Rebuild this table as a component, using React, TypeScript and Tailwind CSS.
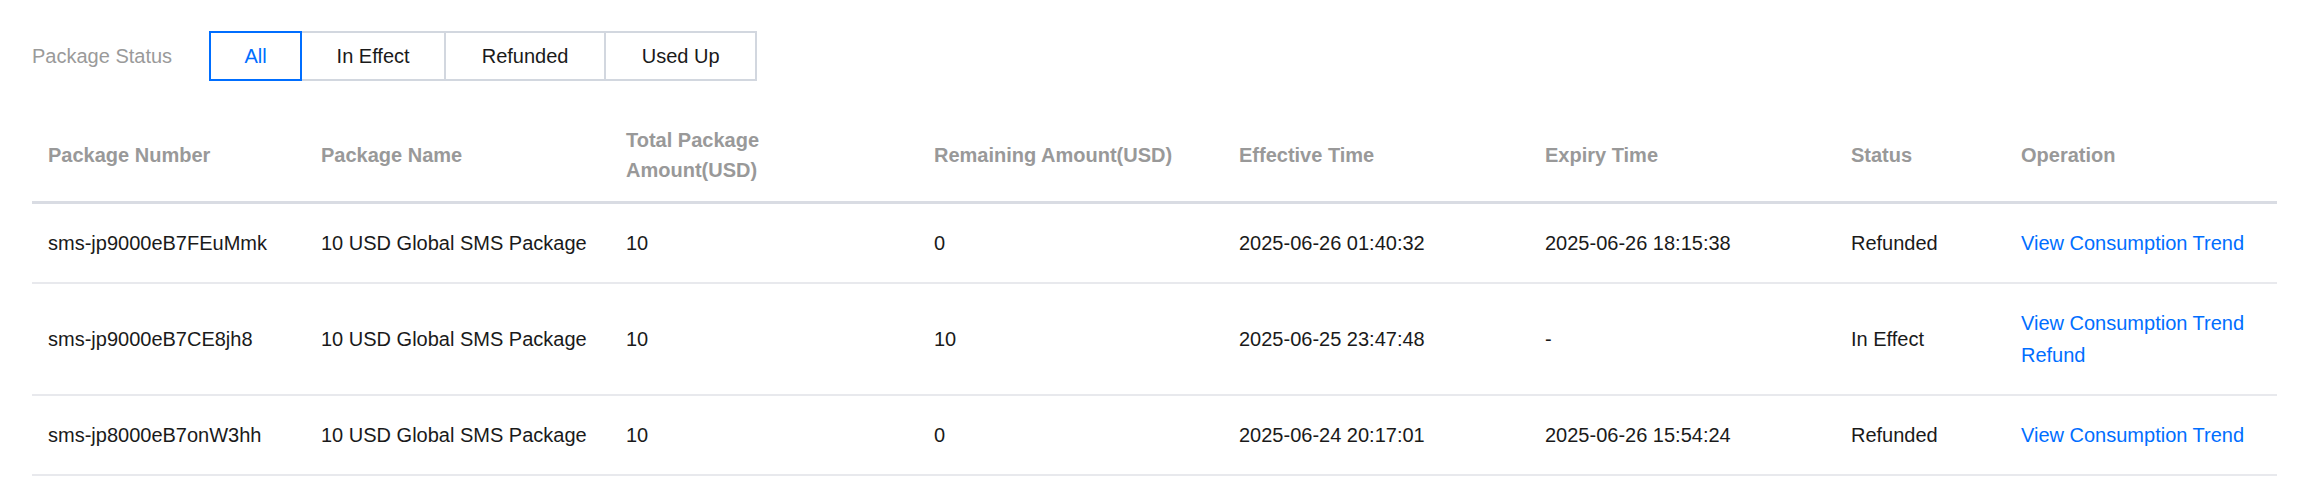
import React from 'react';

type Row = {
    id: string;
    name: string;
    total: string;
    remaining: string;
    effective: string;
    expiry: string;
    status: string;
    ops: string[];
};

const rows: Row[] = [
    {
        id: 'sms-jp9000eB7FEuMmk',
        name: '10 USD Global SMS Package',
        total: '10',
        remaining: '0',
        effective: '2025-06-26 01:40:32',
        expiry: '2025-06-26 18:15:38',
        status: 'Refunded',
        ops: ['View Consumption Trend'],
    },
    {
        id: 'sms-jp9000eB7CE8jh8',
        name: '10 USD Global SMS Package',
        total: '10',
        remaining: '10',
        effective: '2025-06-25 23:47:48',
        expiry: '-',
        status: 'In Effect',
        ops: ['View Consumption Trend', 'Refund'],
    },
    {
        id: 'sms-jp8000eB7onW3hh',
        name: '10 USD Global SMS Package',
        total: '10',
        remaining: '0',
        effective: '2025-06-24 20:17:01',
        expiry: '2025-06-26 15:54:24',
        status: 'Refunded',
        ops: ['View Consumption Trend'],
    },
];

const filters = [
    { label: 'All', width: 'w-[93px]' },
    { label: 'In Effect', width: 'w-[146px]' },
    { label: 'Refunded', width: 'w-[162px]' },
    { label: 'Used Up', width: 'w-[153px]' },
];

export default function App() {
    const active = 'All';

    return (
        <div className="min-h-[480px] bg-white pl-[32px] pr-[29px] pt-[31px] font-['Liberation_Sans',Arial,sans-serif] text-[20px] leading-[30px] text-[#1a1a1a]">
            {/* Status filter */}
            <div className="flex items-center">
                <span className="mr-[37px] text-[#9a9a9a]">Package Status</span>
                <div className="flex">
                    {filters.map((f, i) => {
                        const on = f.label === active;
                        return (
                            <button
                                key={f.label}
                                className={`${f.width} h-[50px] border-2 bg-white text-center ${i > 0 ? '-ml-[2px]' : ''} ${on ? 'relative z-10 border-[#006eff] text-[#006eff]' : 'border-[#d2d7df] text-[#1a1a1a]'}`}
                            >
                                {f.label}
                            </button>
                        );
                    })}
                </div>
            </div>

            {/* Package table */}
            <table className="mt-[28px] w-full table-fixed border-collapse text-left">
                <colgroup>
                    <col className="w-[273px]" />
                    <col className="w-[305px]" />
                    <col className="w-[308px]" />
                    <col className="w-[305px]" />
                    <col className="w-[306px]" />
                    <col className="w-[306px]" />
                    <col className="w-[170px]" />
                    <col className="w-[272px]" />
                </colgroup>
                <thead>
                    <tr className="border-b-[3px] border-[#d9dce3]">
                        {[
                            'Package Number',
                            'Package Name',
                            'Total Package Amount(USD)',
                            'Remaining Amount(USD)',
                            'Effective Time',
                            'Expiry Time',
                            'Status',
                            'Operation',
                        ].map((h) => (
                            <th key={h} className="px-[16px] py-[16px] align-middle font-bold text-[#999999]">
                                <span className="block max-w-[250px]">{h}</span>
                            </th>
                        ))}
                    </tr>
                </thead>
                <tbody>
                    {rows.map((r) => (
                        <tr key={r.id} className="border-b-2 border-[#e8e9ed]">
                            <td className="px-[16px] py-[24px] align-middle">{r.id}</td>
                            <td className="px-[16px] py-[24px] align-middle whitespace-nowrap">{r.name}</td>
                            <td className="px-[16px] py-[24px] align-middle">{r.total}</td>
                            <td className="px-[16px] py-[24px] align-middle">{r.remaining}</td>
                            <td className="px-[16px] py-[24px] align-middle">{r.effective}</td>
                            <td className="px-[16px] py-[24px] align-middle">{r.expiry}</td>
                            <td className="px-[16px] py-[24px] align-middle">{r.status}</td>
                            <td className="px-[16px] py-[24px] align-middle">
                                <div className="flex flex-col items-start gap-[2px]">
                                    {r.ops.map((op) => (
                                        <a key={op} href="#" className="whitespace-nowrap text-[#006eff]">
                                            {op}
                                        </a>
                                    ))}
                                </div>
                            </td>
                        </tr>
                    ))}
                </tbody>
            </table>
        </div>
    );
}
